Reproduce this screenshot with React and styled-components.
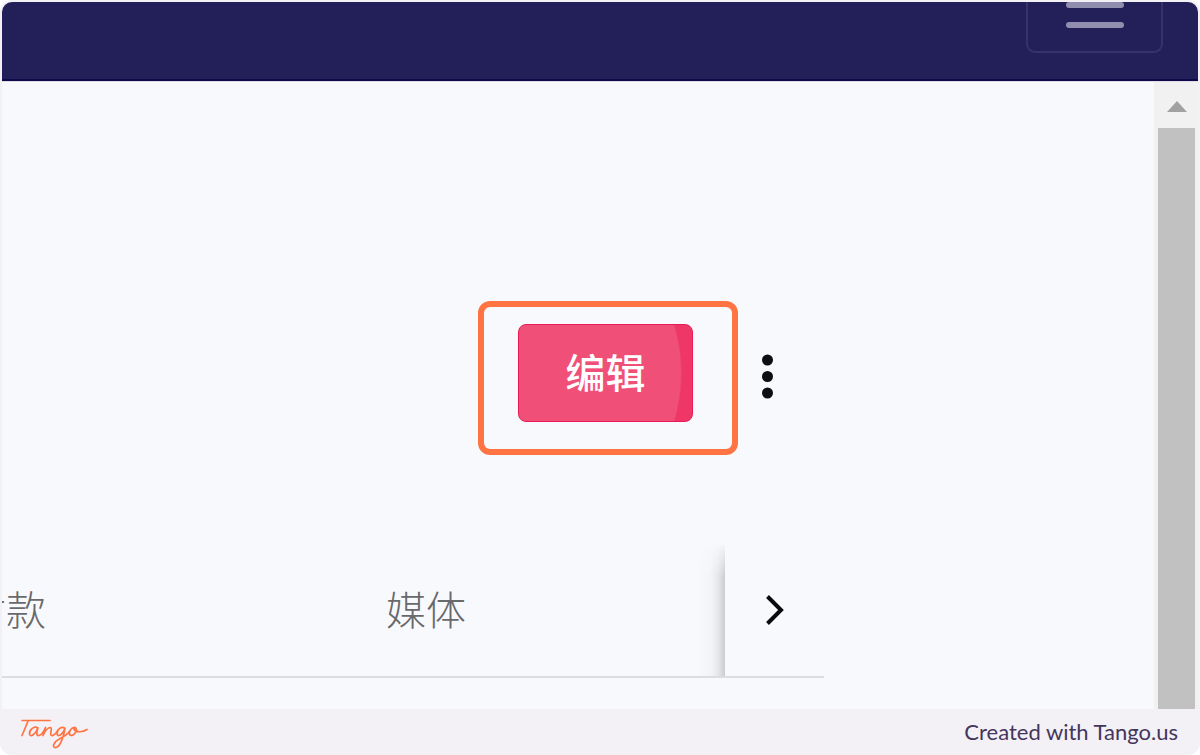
import React from "react";
import styled, { createGlobalStyle } from "styled-components";

const Global = createGlobalStyle`
  *, *::before, *::after { box-sizing: border-box; }
  body { margin: 0; background: #ffffff; }
  button { font: inherit; margin: 0; padding: 0; border: 0; background: none; cursor: pointer; }
`;

const cjk = `"Noto Sans CJK SC", "Noto Sans", sans-serif`;

const Frame = styled.div`
  display: flex;
  flex-direction: column;
  min-height: 100vh;
  padding: 2px 2px 0;
  border-radius: 12px;
  background: #f3f1f6;
  overflow: hidden;
`;

const Capture = styled.div`
  display: flex;
  flex-direction: column;
  flex: 1;
  border-radius: 10px 10px 0 0;
  background: #f8f9fd;
  overflow: hidden;
`;

const TopBar = styled.header`
  display: flex;
  justify-content: flex-end;
  align-items: flex-start;
  height: 79px;
  padding-right: 35px;
  background: #231f59;
  border-bottom: 2px solid #110a4a;
`;

const MenuToggle = styled.button`
  display: flex;
  flex-direction: column;
  align-items: center;
  gap: 14px;
  width: 137px;
  height: 51px;
  border: 2px solid #38326a;
  border-top: 0;
  border-radius: 0 0 9px 9px;
`;

const MenuLine = styled.span`
  width: 58px;
  height: 6px;
  border-radius: 3px;
  background: #918daf;
`;

const Body = styled.div`
  display: flex;
  flex: 1;
  border-top: 1px solid #dddce6;
`;

const Main = styled.main`
  flex: 1;
  min-width: 0;
  padding: 219px 330px 0 0;
`;

const Actions = styled.div`
  display: flex;
  justify-content: flex-end;
  align-items: center;
  padding-right: 36px;
`;

const Highlight = styled.div`
  padding: 17px 39px 27px 34px;
  border: 6px solid #ff7442;
  border-radius: 12px;
`;

const EditButton = styled.button`
  display: block;
  width: 175px;
  height: 98px;
  padding-bottom: 4px;
  border: 1px solid #ea1a59;
  border-radius: 8px;
  background: radial-gradient(circle 168px at -5px 50%, #f04f77 99%, #ee3766 100%);
  color: #ffffff;
  font: 500 40px/60px ${cjk};
`;

const MoreButton = styled.button`
  display: flex;
  justify-content: center;
  width: 40px;
  margin-left: 10px;
`;

const TabBar = styled.div`
  display: flex;
  height: 133px;
  margin-top: 90px;
  border-bottom: 2px solid #dcdde0;
`;

const TabViewport = styled.div`
  position: relative;
  flex: 1;
  min-width: 0;
  overflow: hidden;

  &::after {
    content: "";
    position: absolute;
    inset: 0 0 0 auto;
    width: 28px;
    background: linear-gradient(to right, rgba(0, 0, 0, 0), rgba(0, 0, 0, 0.02) 50%, rgba(0, 0, 0, 0.07) 75%, rgba(0, 0, 0, 0.18));
    mask-image: linear-gradient(to bottom, rgba(0, 0, 0, 0.1), #000 32px);
  }
`;

const TabList = styled.div`
  display: flex;
  align-items: center;
  gap: 340px;
  height: 100%;
  margin-left: -36px;
  padding-bottom: 6px;
`;

const Tab = styled.button`
  flex: none;
  color: #68696b;
  font: 300 40px/60px ${cjk};
`;

const NextButton = styled.button`
  display: flex;
  align-items: center;
  justify-content: center;
  width: 99px;
  padding-bottom: 2px;
`;

const ScrollTrack = styled.div`
  display: flex;
  flex-direction: column;
  width: 44px;
  padding: 0 3px 0 4px;
  background: #f1f1f1;
`;

const ScrollUp = styled.button`
  display: flex;
  align-items: center;
  justify-content: center;
  height: 46px;
  padding-top: 2px;
`;

const ScrollThumb = styled.div`
  flex: 1;
  background: #c1c1c1;
`;

const Footer = styled.footer`
  display: flex;
  align-items: center;
  justify-content: space-between;
  height: 46px;
  padding: 0 20px 0 16px;
`;

const Credit = styled.span`
  color: #44355c;
  font: 400 22px/30px Lato, sans-serif;
`;

export default function App() {
  return (
    <Frame>
      <Global />
      <Capture>
        <TopBar>
          <MenuToggle aria-label="菜单">
            <MenuLine />
            <MenuLine />
          </MenuToggle>
        </TopBar>
        <Body>
          <Main>
            <Actions>
              <Highlight>
                <EditButton>编辑</EditButton>
              </Highlight>
              <MoreButton aria-label="更多">
                <svg width="14" height="48" viewBox="0 0 14 48" fill="#0c0e12">
                  <circle cx="6.500" cy="6" r="5.500" />
                  <circle cx="6.500" cy="22.500" r="5.500" />
                  <circle cx="6.500" cy="39" r="5.500" />
                </svg>
              </MoreButton>
            </Actions>
            <TabBar>
              <TabViewport>
                <TabList role="tablist">
                  <Tab role="tab">付款</Tab>
                  <Tab role="tab">媒体</Tab>
                </TabList>
              </TabViewport>
              <NextButton aria-label="下一页">
                <svg width="20" height="32" viewBox="0 0 20 32" fill="none" stroke="#0b0b0d" strokeWidth="4">
                  <path d="M2.500 2.500 L16 16 L2.500 29.500" />
                </svg>
              </NextButton>
            </TabBar>
          </Main>
          <ScrollTrack>
            <ScrollUp aria-label="向上滚动">
              <svg width="20" height="12" viewBox="0 0 20 12" fill="#a1a1a1">
                <path d="M0 12 L10 1 L20 12 Z" />
              </svg>
            </ScrollUp>
            <ScrollThumb />
          </ScrollTrack>
        </Body>
      </Capture>
      <Footer>
        <svg
          width="72"
          height="34"
          viewBox="0 0 72 34"
          role="img"
          aria-label="Tango"
          fill="none"
          stroke="#ff7442"
          strokeWidth="1.700"
          strokeLinecap="round"
          strokeLinejoin="round"
        >
          <path d="M4 5.500 H32" />
          <path d="M10 6 C8 11 6 16 4 20.500" />
          <path d="M20 13 C16 10.500 11 15 11.500 19 C12 22.500 17 20 20 13 C18 18 18.500 21 21 20.500 C24 20 26 16 27.500 12.500 C27 16 26 18 25 20.500 C27 16 30 12.500 32.500 12.500 C35 13 31 20 33.500 20.500 C36 21 38 18 39.500 16" />
          <path d="M47 13.500 C43.500 10.500 38.500 15 39 19 C39.500 22.500 44.500 20 47 13.500 C45.500 21 42.500 31.500 38 32.500 C33.500 33 35.500 27 40.500 24.500 C46 21.500 50 19 52 16" />
          <path d="M57.500 12.500 C53 12 50.500 17 51.500 19.500 C53 22 58 19 58.500 15 C58.500 12.500 56 12.500 56 14 C56.500 17 64 18 69 14.500" />
        </svg>
        <Credit>Created with Tango.us</Credit>
      </Footer>
    </Frame>
  );
}
